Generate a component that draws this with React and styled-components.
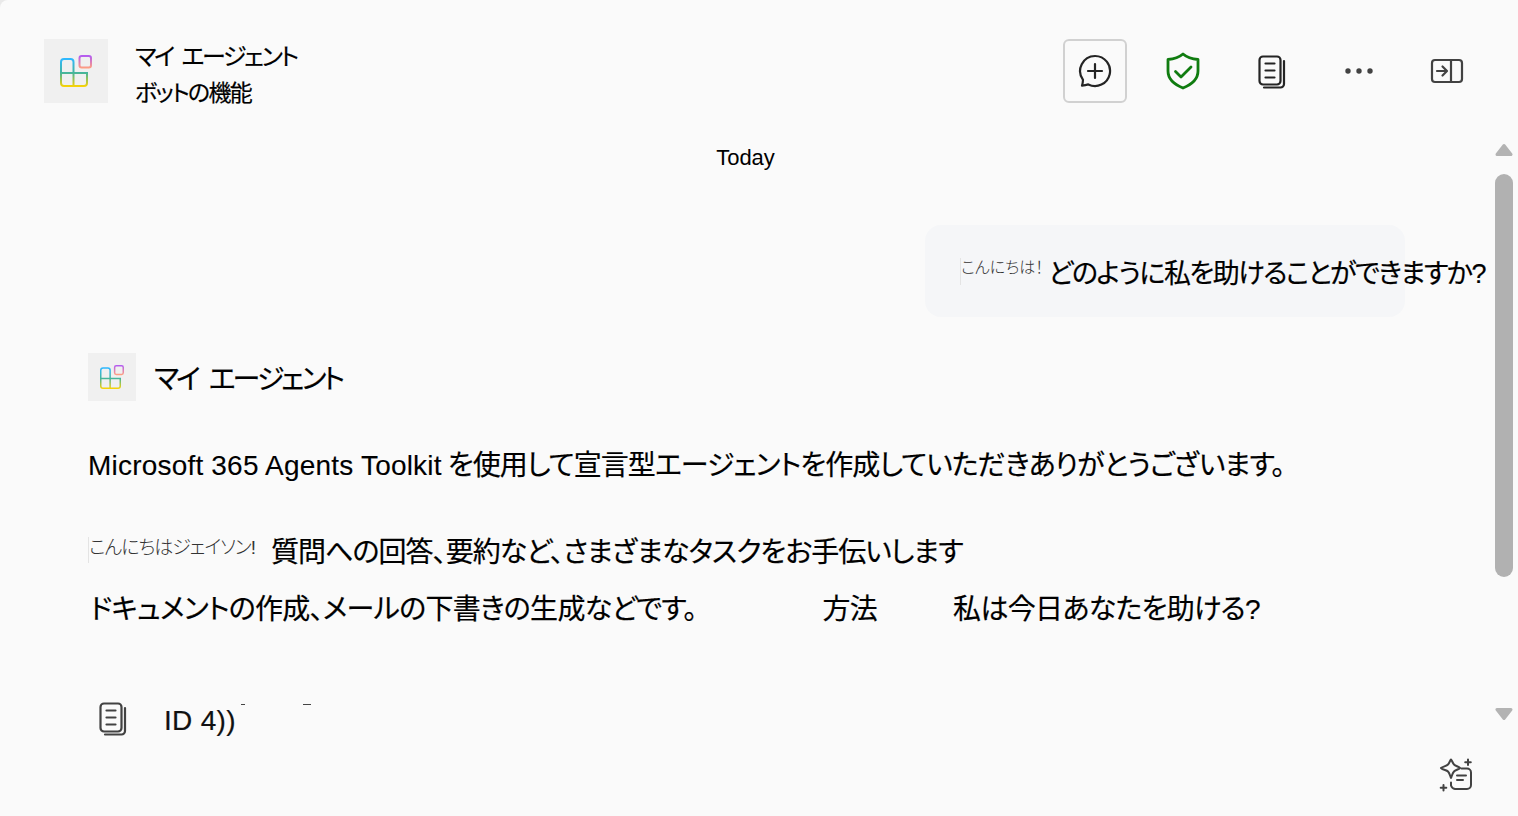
import React from 'react';
import styled, { createGlobalStyle } from 'styled-components';

const GlobalStyle = createGlobalStyle`
  html, body { margin: 0; padding: 0; background: #e9e9e9; }
  body {
    font-family: "Liberation Sans", "Noto Sans CJK JP", sans-serif;
    font-feature-settings: "palt";
    color: #000;
    overflow: hidden;
  }
`;

// アプリのアイコン(四角の組み合わせ)
const AgentGlyph = ({ size, idSuffix }) => (
  <svg width={size} height={size} viewBox="0 0 32 32" fill="none">
    <defs>
      <linearGradient id={`grid${idSuffix}`} gradientUnits="userSpaceOnUse" x1="0" y1="4" x2="0" y2="32">
        <stop offset="0" stopColor="#2fb8ff" />
        <stop offset="0.5" stopColor="#45b59a" />
        <stop offset="1" stopColor="#ffd400" />
      </linearGradient>
      <linearGradient id={`small${idSuffix}`} gradientUnits="userSpaceOnUse" x1="0" y1="1" x2="0" y2="13">
        <stop offset="0" stopColor="#b45cf0" />
        <stop offset="1" stopColor="#ff9f80" />
      </linearGradient>
    </defs>
    <path
      d="M1 7a3 3 0 0 1 3-3h6.500a3 3 0 0 1 3 3V18H27V28a3 3 0 0 1-3 3H4a3 3 0 0 1-3-3zM1 18h12.500M13.500 18v13"
      stroke={`url(#grid${idSuffix})`}
      strokeWidth="2"
    />
    <rect x="19.500" y="1" width="11.500" height="11.500" rx="2.200" stroke={`url(#small${idSuffix})`} strokeWidth="2" />
  </svg>
);

const ChatAddIcon = () => (
  <svg width="36" height="36" viewBox="0 0 36 36" fill="none" stroke="#242424" strokeWidth="2.200" strokeLinecap="round">
    <path d="M18 3a15 15 0 1 1-6.700 28.400c-1.700.5-4 1-6.300 1.300.6-1.800.9-3.800 1-5.900A15 15 0 0 1 18 3z" strokeLinejoin="round" />
    <path d="M18 11v14M11 18h14" />
  </svg>
);

const ShieldIcon = () => (
  <svg width="36" height="38" viewBox="0 0 36 38" fill="none" stroke="#107c10" strokeWidth="2.800" strokeLinecap="round" strokeLinejoin="round">
    <path d="M18 2c3.500 3 8.500 5 15 5.500V19c0 7.500-5 13-15 17C8 32 3 26.500 3 19V7.500C9.500 7 14.500 5 18 2z" />
    <path d="M10.500 19.500l5.500 5.500 10-10" />
  </svg>
);

const DocsIcon = ({ stroke }) => (
  <svg width="28" height="34" viewBox="0 0 28 34" fill="none" stroke={stroke} strokeWidth="2.200" strokeLinecap="round">
    <rect x="1.500" y="1.500" width="21" height="28" rx="3.500" />
    <path d="M7.500 8.500h9M7.500 15.500h9M7.500 22.500h9" />
    <path d="M26 6v23a3.500 3.500 0 0 1-3.500 3.500H6" />
  </svg>
);

const MoreIcon = () => (
  <svg width="28" height="8" viewBox="0 0 28 8" fill="#424242">
    <circle cx="3" cy="4" r="2.700" />
    <circle cx="14" cy="4" r="2.700" />
    <circle cx="25" cy="4" r="2.700" />
  </svg>
);

const PanelIcon = () => (
  <svg width="34" height="26" viewBox="0 0 34 26" fill="none" stroke="#424242" strokeWidth="2.200" strokeLinecap="round" strokeLinejoin="round">
    <rect x="2" y="2" width="30" height="22" rx="3" />
    <path d="M21 2v22M7 13h9M12.500 8.500L17 13l-4.500 4.500" />
  </svg>
);

const CopilotPromptIcon = () => (
  <svg width="36" height="36" viewBox="0 0 36 36" fill="none" stroke="#424242" strokeWidth="2" strokeLinecap="round" strokeLinejoin="round">
    <path d="M13 2.500c1.200 1 1.500 3.500 3 5s4.500 2 6 3.500c-1.500 1.500-4.500 2-6 3.500s-2 4-3 6.500c-1-2.500-1.500-5-3-6.500S5 13 3 11c2-1.500 5.500-2 7-3.500s2-4 3-5z" />
    <path d="M23.500 11.500H29a4 4 0 0 1 4 4V28a4 4 0 0 1-4 4H17a5 5 0 0 1-4-3.500v-3" />
    <path d="M19 18.500h9M19 23h6" />
    <path d="M30 2.500v5.500M27.200 5.200h5.600M5.500 28v5.500M2.700 30.700h5.600" />
  </svg>
);

const ScrollArrow = ({ down }) => (
  <svg width="18" height="14" viewBox="0 0 18 14" fill="#b3b3b3" stroke="#b3b3b3" strokeWidth="3" strokeLinejoin="round">
    <path d={down ? 'M2 2.500h14L9 11.500z' : 'M9 2.500l7 9H2z'} />
  </svg>
);

const Page = styled.div`
  position: relative;
  display: flex;
  flex-direction: column;
  width: 1518px;
  height: 816px;
  background: #fafafa;
  border-top-left-radius: 8px;
  overflow: hidden;
  -webkit-text-stroke: 0.2px currentColor;
`;

const Header = styled.header`
  display: flex;
  align-items: center;
  height: 64px;
  padding: 39px 39px 0 44px;
  flex-shrink: 0;
`;

const AgentTile = styled.div`
  display: flex;
  align-items: center;
  justify-content: center;
  width: ${(props) => props.$size}px;
  height: ${(props) => props.$size}px;
  background: #f0f0f0;
  flex-shrink: 0;
`;

const TitleBlock = styled.div`
  display: flex;
  flex-direction: column;
  gap: 10px;
  margin: 8px 0 0 27px;
  font-size: 24px;
  line-height: 26px;
  letter-spacing: -2.300px;
  word-spacing: 4px;
`;

const Subtitle = styled.div`
  font-size: 23px;
  letter-spacing: -1.700px;
`;

const Toolbar = styled.div`
  display: flex;
  gap: 24px;
  margin-left: auto;
`;

const ToolButton = styled.button`
  display: flex;
  align-items: center;
  justify-content: center;
  width: 64px;
  height: 64px;
  padding: ${(props) => props.$nudge || 0}px 0 0 ${(props) => props.$nudge || 0}px;
  background: transparent;
  border: 2px solid ${(props) => (props.$active ? '#d1d1d1' : 'transparent')};
  border-radius: 6px;
`;

const Body = styled.div`
  display: flex;
  flex: 1;
  min-height: 0;
`;

const Chat = styled.main`
  flex: 1;
  min-width: 0;
  padding-left: 88px;
`;

const DateLabel = styled.div`
  width: 1315px;
  height: 26px;
  margin-top: 42px;
  text-align: center;
  font-size: 22px;
  line-height: 26px;
  -webkit-text-stroke: 0;
`;

const BubbleRow = styled.div`
  display: flex;
  justify-content: flex-end;
  margin-top: 54px;
  padding-right: 90px;
`;

const Bubble = styled.div`
  display: flex;
  align-items: center;
  box-sizing: border-box;
  width: 480px;
  height: 92px;
  padding: 1px 0 0 35px;
  background: #f5f6f8;
  border-radius: 16px;
  white-space: nowrap;
`;

const TinyGreeting = styled.span`
  display: inline-block;
  padding-bottom: ${(props) => props.$tail}px;
  margin-right: ${(props) => props.$gap}px;
  border-left: 1px solid #e4e4e4;
  font-size: ${(props) => props.$size}px;
  line-height: 1.2;
  font-weight: 300;
  color: #333;
  letter-spacing: ${(props) => props.$spacing || 0}px;
  -webkit-text-stroke: 0;
`;

const BubbleText = styled.span`
  font-size: 27px;
  letter-spacing: -1.500px;
`;

const AgentRow = styled.div`
  display: flex;
  align-items: center;
  gap: 18px;
  margin-top: 36px;
  height: 48px;
`;

const AgentName = styled.div`
  font-size: 28px;
  letter-spacing: -2.900px;
  word-spacing: 6px;
`;

const Line = styled.p`
  display: flex;
  align-items: center;
  height: 40px;
  margin: ${(props) => props.$top}px 0 0 ${(props) => props.$left || 0}px;
  font-size: 28px;
  white-space: nowrap;
  letter-spacing: ${(props) => props.$spacing}px;
`;

const LatinRun = styled.span`
  margin: 5px 6px 0 0;
  font-size: 28px;
  letter-spacing: 0.200px;
  -webkit-text-stroke: 0.100px currentColor;
`;

const Gap = styled.span`
  display: inline-block;
  width: ${(props) => props.$width}px;
`;

const Citation = styled.div`
  display: flex;
  align-items: center;
  gap: 37px;
  height: 40px;
  margin: 72px 0 0 11px;
  font-size: 28px;
  color: #111;
`;

const CitationTail = styled.div`
  display: flex;
  align-items: center;
`;

const CitationText = styled.span`
  margin-top: 3px;
  letter-spacing: 0.300px;
`;

const TailMark = styled.span`
  align-self: flex-start;
  width: ${(props) => props.$width}px;
  height: 1px;
  margin: 2px 0 0 ${(props) => props.$left}px;
  background: #444;
`;

const ScrollColumn = styled.aside`
  display: flex;
  flex-direction: column;
  align-items: center;
  width: 18px;
  margin-right: 5px;
  padding-top: 40px;
  flex-shrink: 0;
`;

const Thumb = styled.div`
  width: 18px;
  height: 403px;
  margin: 17px 0 130px;
  background: #b1b1b1;
  border-radius: 9px;
`;

const PromptButton = styled.div`
  position: absolute;
  right: 44px;
  bottom: 23px;
  display: flex;
`;

const App = () => {
  return (
    <>
      <GlobalStyle />
      <Page>
        <Header>
          <AgentTile $size={64}>
            <AgentGlyph size={32} idSuffix="a" />
          </AgentTile>
          <TitleBlock>
            <div>マイ エージェント</div>
            <Subtitle>ボットの機能</Subtitle>
          </TitleBlock>
          <Toolbar>
            <ToolButton $active><ChatAddIcon /></ToolButton>
            <ToolButton><ShieldIcon /></ToolButton>
            <ToolButton $nudge={2}><DocsIcon stroke="#242424" /></ToolButton>
            <ToolButton><MoreIcon /></ToolButton>
            <ToolButton><PanelIcon /></ToolButton>
          </Toolbar>
        </Header>
        <Body>
          <Chat>
            <DateLabel>Today</DateLabel>
            <BubbleRow>
              <Bubble>
                <TinyGreeting $size={16} $gap={5} $tail={8}>こんにちは！</TinyGreeting>
                <BubbleText>どのように私を助けることができますか?</BubbleText>
              </Bubble>
            </BubbleRow>
            <AgentRow>
              <AgentTile $size={48}>
                <AgentGlyph size={24} idSuffix="b" />
              </AgentTile>
              <AgentName>マイ エージェント</AgentName>
            </AgentRow>
            <Line $top={42} $spacing={-0.9}>
              <LatinRun>Microsoft 365 Agents Toolkit</LatinRun>
              を使用して宣言型エージェントを作成していただきありがとうございます。
            </Line>
            <Line $top={47} $spacing={-0.96}>
              <TinyGreeting $size={19} $gap={16} $tail={3} $spacing={-1}>こんにちはジェイソン!</TinyGreeting>
              質問への回答、要約など、さまざまなタスクをお手伝いします
            </Line>
            <Line $top={17} $left={2} $spacing={-0.7}>
              ドキュメントの作成、メールの下書きの生成などです。
              <Gap $width={126} />
              方法
              <Gap $width={76} />
              私は今日あなたを助ける?
            </Line>
            <Citation>
              <DocsIcon stroke="#424242" />
              <CitationTail>
                <CitationText>ID 4))</CitationText>
                <TailMark $width={4} $left={5} />
                <TailMark $width={8} $left={58} />
              </CitationTail>
            </Citation>
          </Chat>
          <ScrollColumn>
            <ScrollArrow />
            <Thumb />
            <ScrollArrow down />
          </ScrollColumn>
        </Body>
        <PromptButton><CopilotPromptIcon /></PromptButton>
      </Page>
    </>
  );
};

export default App;
